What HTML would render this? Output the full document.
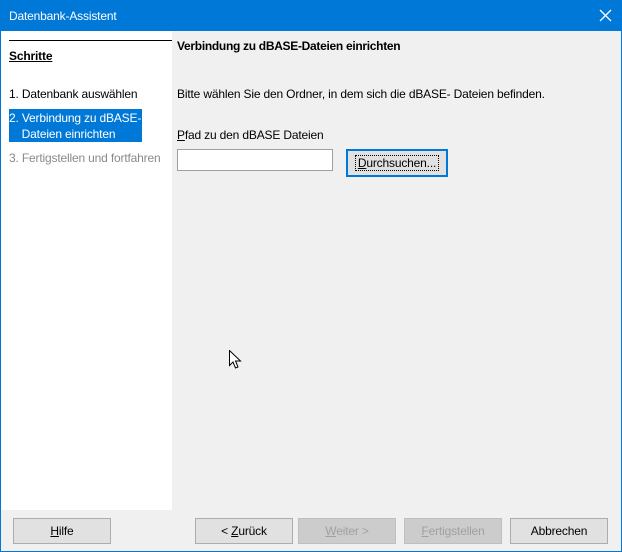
<!DOCTYPE html>
<html><head><meta charset="utf-8"><style>
*{margin:0;padding:0;box-sizing:border-box}
body{width:622px;height:552px;overflow:hidden;font-family:"Liberation Sans",sans-serif;font-size:12px;color:#000;background:#0078d7;position:relative;letter-spacing:-0.17px}
.win{position:absolute;left:1px;top:31px;width:620px;height:520px;background:#f0f0f0}
.t{position:absolute;white-space:nowrap}
.btn{position:absolute;top:487px;height:26px;width:98px;border:1px solid #adadad;background:#e1e1e1;text-align:center;line-height:24px}
.dis{color:#a0a0a0;background:#cccccc;border-color:#bfbfbf}
u{text-decoration:underline}
</style></head><body>
<div class="t" style="left:9px;top:9px;color:#fff;font-size:12px">Datenbank-Assistent</div>
<svg style="position:absolute;left:599px;top:9px" width="13" height="13"><path d="M1 1L12 12M12 1L1 12" stroke="#fff" stroke-width="1.3"/></svg>
<div class="win">
 <div style="position:absolute;left:0;top:0;width:171px;height:479px;background:#fff"></div>
 <div style="position:absolute;left:8px;top:9px;width:163px;height:1px;background:#000"></div>
 <div class="t" style="left:8px;top:18px;font-weight:bold;text-decoration:underline">Schritte</div>
 <div class="t" style="left:8px;top:56px">1. Datenbank auswählen</div>
 <div style="position:absolute;left:8px;top:78px;width:133px;height:33px;background:#0078d7"></div>
 <div class="t" style="left:8px;top:79px;color:#fff;line-height:16px">2. Verbindung zu dBASE-<br>&nbsp;&nbsp;&nbsp;&nbsp;Dateien einrichten</div>
 <div class="t" style="left:8px;top:120px;color:#8a8a8a">3. Fertigstellen und fortfahren</div>
 <div class="t" style="left:176px;top:8px;font-weight:bold;letter-spacing:-0.3px">Verbindung zu dBASE-Dateien einrichten</div>
 <div class="t" style="left:176px;top:56px">Bitte wählen Sie den Ordner, in dem sich die dBASE- Dateien befinden.</div>
 <div class="t" style="left:176px;top:97px"><u>P</u>fad zu den dBASE Dateien</div>
 <div style="position:absolute;left:176px;top:118px;width:156px;height:22px;background:#fff;border:1px solid #a0a0a0"></div>
 <div style="position:absolute;left:345px;top:118px;width:102px;height:28px;border:2px solid #0078d7;background:#e1e1e1">
  <div style="position:absolute;left:7px;top:4px;width:84px;height:16px;border:1px dotted #000;text-align:center;line-height:14px"><u>D</u>urchsuchen...</div>
 </div>
 <svg style="position:absolute;left:228px;top:319px" width="14" height="20"><path d="M0.5 0.5V15.5L4 12L6.5 18L9 17L6.5 11H11.5Z" fill="#fff" stroke="#000" stroke-width="1"/></svg>
 <div class="btn" style="left:12px"><u>H</u>ilfe</div>
 <div class="btn" style="left:194px">&lt; <u>Z</u>urück</div>
 <div class="btn dis" style="left:297px"><u>W</u>eiter &gt;</div>
 <div class="btn dis" style="left:403px"><u>F</u>ertigstellen</div>
 <div class="btn" style="left:509px">Abbrechen</div>
</div>
</body></html>
